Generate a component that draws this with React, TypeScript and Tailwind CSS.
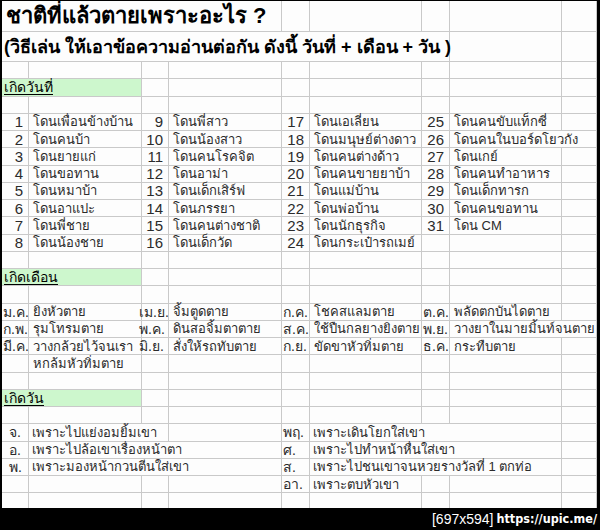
import React from "react";

type Kind = "num" | "txt" | "mtxt" | "dtxt" | "lab" | "labc" | "day" | "title" | "sub" | "head";
type Cell = { t?: string; s?: number; k?: Kind };

const SPAN: Record<number, string> = {
  1: "",
  2: "col-span-2",
  3: "col-span-3",
  4: "col-span-4",
  7: "col-span-7",
};

const KIND: Record<Kind, string> = {
  num: "justify-end pr-[5px] text-[15px] text-[#2b2b2b]",
  txt: "pl-[4px] text-[13px] text-[#2b2b2b]",
  mtxt: "pl-[4px] text-[13px] text-[#2b2b2b]",
  dtxt: "pl-[3px] text-[13px] text-[#2b2b2b]",
  lab: "pl-[1px] text-[14px] text-[#2b2b2b]",
  labc: "text-[14px] text-[#2b2b2b]",
  day: "pl-[7px] text-[14px] text-[#2b2b2b]",
  title: "pl-[4px] text-[22px] font-bold text-black",
  sub: "pl-[2px] text-[18px] font-bold text-black",
  head: "pl-[2px] text-[14px] text-black underline underline-offset-2 bg-[#cdf7cd]",
};

const empty = (n: number): Cell[] => Array.from({ length: n }, () => ({}));

const DAYS_OF_MONTH: [number, string, number, string, number, string, number | null, string][] = [
  [1, "โดนเพื่อนข้างบ้าน", 9, "โดนพี่สาว", 17, "โดนเอเลี่ยน", 25, "โดนคนขับแท็กซี่"],
  [2, "โดนคนบ้า", 10, "โดนน้องสาว", 18, "โดนมนุษย์ต่างดาว", 26, "โดนคนในบอร์ดโยวกัง"],
  [3, "โดนยายแก่", 11, "โดนคนโรคจิต", 19, "โดนคนต่างด้าว", 27, "โดนเกย์"],
  [4, "โดนขอทาน", 12, "โดนอาม่า", 20, "โดนคนขายยาบ้า", 28, "โดนคนทำอาหาร"],
  [5, "โดนหมาบ้า", 13, "โดนเด็กเสิร์ฟ", 21, "โดนแม่บ้าน", 29, "โดนเด็กทารก"],
  [6, "โดนอาแปะ", 14, "โดนภรรยา", 22, "โดนพ่อบ้าน", 30, "โดนคนขอทาน"],
  [7, "โดนพี่ชาย", 15, "โดนคนต่างชาติ", 23, "โดนนักธุรกิจ", 31, "โดน CM"],
  [8, "โดนน้องชาย", 16, "โดนเด็กวัด", 24, "โดนกระเป๋ารถเมย์", null, ""],
];

const MONTHS: string[][] = [
  ["ม.ค.", "ยิงหัวตาย", "เม.ย.", "จิ้มตูดตาย", "ก.ค.", "โชคสแลมตาย", "ต.ค.", "พลัดตกบันไดตาย"],
  ["ก.พ.", "รุมโทรมตาย", "พ.ค.", "ดินสอจิ้มตาตาย", "ส.ค.", "ใช้ปืนกลยางยิงตาย", "พ.ย.", "วางยาในมายมิ้นท์จนตาย"],
  ["มี.ค.", "วางกล้วยไว้จนเรา", "มิ.ย.", "สั่งให้รถทับตาย", "ก.ย.", "ขัดขาหัวทิ่มตาย", "ธ.ค.", "กระทืบตาย"],
];

function buildRows(): Cell[][] {
  const rows: Cell[][] = [];
  rows.push([{ t: "ชาติที่แล้วตายเพราะอะไร ?", s: 4, k: "title" }, ...empty(5)]);
  rows.push([{ t: "(วิธีเล่น ให้เอาข้อความอ่านต่อกัน ดังนี้ วันที่ + เดือน + วัน )", s: 7, k: "sub" }, ...empty(2)]);
  rows.push(empty(9));
  rows.push([{ t: "เกิดวันที่", s: 2, k: "head" }, ...empty(7)]);
  rows.push(empty(9));

  DAYS_OF_MONTH.forEach(([a, b, c, d, e, f, g, h]) => {
    const row: Cell[] = [
      { t: String(a), k: "num" },
      { t: b, k: "txt" },
      { t: String(c), k: "num" },
      { t: d, k: "txt" },
      { t: String(e), k: "num" },
      { t: f, k: "txt" },
    ];
    if (g === null) row.push(...empty(3));
    else if (g === 26) row.push({ t: String(g), k: "num" }, { t: h, s: 2, k: "txt" });
    else row.push({ t: String(g), k: "num" }, { t: h, k: "txt" }, {});
    rows.push(row);
  });

  rows.push(empty(9));
  rows.push([{ t: "เกิดเดือน", s: 2, k: "head" }, ...empty(7)]);
  rows.push(empty(9));

  MONTHS.forEach((m, i) => {
    const row: Cell[] = [
      { t: m[0], k: "lab" },
      { t: m[1], k: "mtxt" },
      { t: m[2], k: "labc" },
      { t: m[3], k: "mtxt" },
      { t: m[4], k: "lab" },
      { t: m[5], k: "mtxt" },
      { t: m[6], k: "lab" },
    ];
    if (i === 1) row.push({ t: m[7], s: 2, k: "mtxt" });
    else row.push({ t: m[7], k: "mtxt" }, {});
    rows.push(row);
  });
  rows.push([{}, { t: "หกล้มหัวทิ่มตาย", k: "mtxt" }, ...empty(7)]);

  rows.push(empty(9));
  rows.push([{ t: "เกิดวัน", s: 2, k: "head" }, ...empty(7)]);
  rows.push(empty(9));

  rows.push([{ t: "จ.", k: "day" }, { t: "เพราะไปแย่งอมยิ้มเขา", s: 2, k: "dtxt" }, {}, { t: "พฤ.", k: "lab" }, { t: "เพราะเดินโยกใส่เขา", s: 3, k: "dtxt" }, {}]);
  rows.push([{ t: "อ.", k: "day" }, { t: "เพราะไปล้อเขาเรื่องหน้าตา", s: 3, k: "dtxt" }, { t: "ศ.", k: "lab" }, { t: "เพราะไปทำหน้าหื่นใส่เขา", s: 3, k: "dtxt" }, {}]);
  rows.push([{ t: "พ.", k: "day" }, { t: "เพราะมองหน้ากวนตีนใส่เขา", s: 3, k: "dtxt" }, { t: "ส.", k: "lab" }, { t: "เพราะไปชนเขาจนหวยรางวัลที่ 1 ตกท่อ", s: 3, k: "dtxt" }, {}]);
  rows.push([...empty(4), { t: "อา.", k: "lab" }, { t: "เพราะตบหัวเขา", k: "dtxt" }, ...empty(3)]);
  rows.push(empty(9));
  return rows;
}

export default function App() {
  const rows = buildRows();
  return (
    <div className="w-[600px] h-[530px] bg-black flex flex-col font-['Liberation_Sans','Tahoma',sans-serif]">
      {/* sheet */}
      <div className="h-[508px] overflow-hidden border-t border-l-2 border-r-[3px] border-black bg-[#fdfdfd]">
        <div className="grid grid-cols-[27px_113px_27px_113px_28px_112px_28px_112px_35px] grid-rows-[31px_30px_repeat(26,17.25px)]">
          {rows.flatMap((row, r) =>
            row.map((c, i) => (
              <div
                key={`${r}-${i}`}
                className={`relative flex items-center whitespace-nowrap overflow-visible border-r border-b border-[#c9c9c9] leading-none ${SPAN[c.s ?? 1]} ${c.k ? KIND[c.k] : ""}`}
              >
                {c.t && <span className={c.k === "labc" ? "-ml-[3px]" : ""}>{c.t}</span>}
              </div>
            ))
          )}
        </div>
      </div>
      {/* watermark band */}
      <div className="h-[22px] flex items-center justify-end pr-[3px] gap-[3px] text-white">
        <span className="text-[14px] font-['Liberation_Sans',sans-serif]">[697x594]</span>
        <span className="text-[12.5px] font-bold font-['DejaVu_Sans_Condensed','Liberation_Sans',sans-serif]">https://upic.me/</span>
      </div>
    </div>
  );
}
